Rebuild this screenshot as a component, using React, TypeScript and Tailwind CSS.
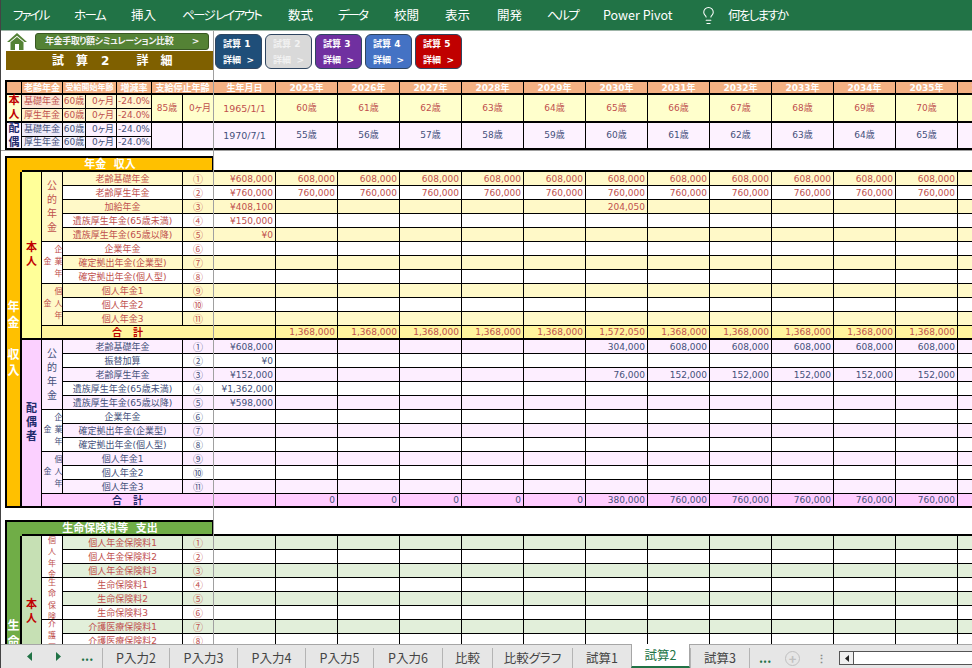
import type { ReactNode } from "react";
import { Lightbulb } from "lucide-react";

const ribbon = [
  { label: "ファイル", w: "w-[61px] tracking-[-2px]" },
  { label: "ホーム", w: "w-[57px] tracking-[-1.6px]" },
  { label: "挿入", w: "w-[51px]" },
  { label: "ページ レイアウト", w: "w-[106px] tracking-[-1.7px]" },
  { label: "数式", w: "w-[50px]" },
  { label: "データ", w: "w-[56px] tracking-[-2px]" },
  { label: "校閲", w: "w-[51px]" },
  { label: "表示", w: "w-[52px]" },
  { label: "開発", w: "w-[50px]" },
  { label: "ヘルプ", w: "w-[56px] tracking-[-1.5px]" },
  { label: "Power Pivot", w: "w-[99px]" },
];

const tiles = [
  { no: "1", cls: "bg-[#1f4e79] text-white" },
  { no: "2", cls: "bg-[#d9d9d9] text-[#f2f2f2]" },
  { no: "3", cls: "bg-[#7030a0] text-white" },
  { no: "4", cls: "bg-[#4472c4] text-white" },
  { no: "5", cls: "bg-[#c00000] text-white" },
];

const circled = ["①", "②", "③", "④", "⑤", "⑥", "⑦", "⑧", "⑨", "⑩", "⑪"];
const years = [2025, 2026, 2027, 2028, 2029, 2030, 2031, 2032, 2033, 2034, 2035, 2036];

type Theme = {
  band: string;
  text: string;
  person: string;
  total: string;
  personText: string;
};

const yellow: Theme = {
  band: "bg-[#fff9c8]",
  text: "text-[#c0504d]",
  person: "bg-[#ffff99]",
  total: "bg-[#fff59d]",
  personText: "text-[#c00000]",
};
const pink: Theme = {
  band: "bg-[#fdeeff]",
  text: "text-[#44507a]",
  person: "bg-[#fbd0ff]",
  total: "bg-[#ffccff]",
  personText: "text-[#1f2a6b]",
};
const green: Theme = {
  band: "bg-[#e2efda]",
  text: "text-[#c0504d]",
  person: "bg-[#c6e0b4]",
  total: "bg-[#c6e0b4]",
  personText: "text-[#c00000]",
};

type Row = { name: string; first?: string; vals?: string[] };
type Group = { at: number; span: number; label: string; wrap?: boolean; small?: boolean; fill: boolean };

const same = (v: string) => years.map(() => v);
const from2030 = (a: string, b: string) => years.map((_, i) => (i < 5 ? "" : i === 5 ? a : b));

const selfRows: Row[] = [
  { name: "老齢基礎年金", first: "¥608,000", vals: same("608,000") },
  { name: "老齢厚生年金", first: "¥760,000", vals: same("760,000") },
  { name: "加給年金", first: "¥408,100", vals: years.map((_, i) => (i === 5 ? "204,050" : "")) },
  { name: "遺族厚生年金(65歳未満)", first: "¥150,000" },
  { name: "遺族厚生年金(65歳以降)", first: "¥0" },
  { name: "企業年金" },
  { name: "確定拠出年金(企業型)" },
  { name: "確定拠出年金(個人型)" },
  { name: "個人年金1" },
  { name: "個人年金2" },
  { name: "個人年金3" },
];

const spouseRows: Row[] = [
  { name: "老齢基礎年金", first: "¥608,000", vals: from2030("304,000", "608,000") },
  { name: "振替加算", first: "¥0" },
  { name: "老齢厚生年金", first: "¥152,000", vals: from2030("76,000", "152,000") },
  { name: "遺族厚生年金(65歳未満)", first: "¥1,362,000" },
  { name: "遺族厚生年金(65歳以降)", first: "¥598,000" },
  { name: "企業年金" },
  { name: "確定拠出年金(企業型)" },
  { name: "確定拠出年金(個人型)" },
  { name: "個人年金1" },
  { name: "個人年金2" },
  { name: "個人年金3" },
];

const insuranceRows: Row[] = [
  { name: "個人年金保険料1" },
  { name: "個人年金保険料2" },
  { name: "個人年金保険料3" },
  { name: "生命保険料1" },
  { name: "生命保険料2" },
  { name: "生命保険料3" },
  { name: "介護医療保険料1" },
  { name: "介護医療保険料2" },
];

const pensionGroups: Group[] = [
  { at: 0, span: 5, label: "公的年金", fill: true },
  { at: 5, span: 3, label: "企業年金", wrap: true, fill: false },
  { at: 8, span: 3, label: "個人年金", wrap: true, fill: true },
];
const insuranceGroups: Group[] = [
  { at: 0, span: 3, label: "個人年金", small: true, fill: false },
  { at: 3, span: 3, label: "生命保険", small: true, fill: false },
  { at: 6, span: 2, label: "介護医療", small: true, fill: false },
];

const line = "border-r border-b border-black";

function Cols({ head }: { head: string[] }) {
  return (
    <colgroup>
      {head.map((w, i) => (
        <col key={i} className={w} />
      ))}
      <col className="w-[62px]" />
      {years.map((y) => (
        <col key={y} className="w-[62px]" />
      ))}
    </colgroup>
  );
}

function GroupCell({ g, theme }: { g: Group; theme: Theme }) {
  const chars = g.label.split("");
  return (
    <td rowSpan={g.span} className={`${line} ${g.fill ? theme.band : "bg-white"} ${theme.text}`}>
      {g.wrap ? (
        <div className="h-[41px] overflow-hidden flex items-center justify-center">
          <span className="h-[41px] text-center text-[8px] leading-[11px] tracking-[4px] [writing-mode:vertical-rl]">{g.label}</span>
        </div>
      ) : g.small ? (
        <div className={`${g.span === 3 ? "h-[41px]" : "h-[27px]"} overflow-hidden`}>
          <div className="-mt-[2px] flex flex-col items-center text-[8px] leading-[11.3px] font-['Noto_Sans_CJK_JP',sans-serif]">
            {chars.map((c, i) => (
              <span key={i}>{c}</span>
            ))}
          </div>
        </div>
      ) : (
        <div className="flex flex-col items-center justify-center text-[10px] leading-[14px]">
          {chars.map((c, i) => (
            <span key={i}>{c}</span>
          ))}
        </div>
      )}
    </td>
  );
}

function PersonCell({ label, span, theme, align }: { label: string; span: number; theme: Theme; align?: string }) {
  return (
    <td rowSpan={span} className={`border-r border-b-2 border-black ${theme.person} ${align ?? ""}`}>
      <div className={`flex flex-col items-center text-[11px] leading-[14px] font-bold ${theme.personText}`}>
        {label.split("").map((c, i) => (
          <span key={i}>{c}</span>
        ))}
      </div>
    </td>
  );
}

function Block({
  label,
  span,
  rows,
  groups,
  theme,
  total,
  align,
}: {
  label: string;
  span: number;
  rows: Row[];
  groups: Group[];
  theme: Theme;
  total?: string[];
  align?: string;
}) {
  return (
    <>
      {rows.map((row, i) => {
        const tint = i % 2 === 0 ? theme.band : "bg-white";
        const g = groups.find((x) => x.at === i);
        return (
          <tr key={i} className="h-[14px]">
            {i === 0 && <PersonCell label={label} span={span} theme={theme} align={align} />}
            {g && <GroupCell g={g} theme={theme} />}
            <td className={`${line} ${tint} ${theme.text} pt-px text-center whitespace-nowrap`}>{row.name}</td>
            <td className={`${line} ${tint} ${theme.text} pt-px text-center font-['Noto_Sans_CJK_JP',sans-serif] text-[10px]`}>{circled[i]}</td>
            <td className={`${line} ${tint} ${theme.text} pt-px text-right pr-[2px]`}>{row.first}</td>
            {years.map((y, k) => (
              <td key={y} className={`${line} ${tint} ${theme.text} pt-px text-right pr-[2px]`}>
                {row.vals?.[k]}
              </td>
            ))}
          </tr>
        );
      })}
      {total && (
        <tr className="h-[14px] leading-[11px]">
          <td colSpan={3} className={`border-r border-b-2 border-black ${theme.total} ${theme.personText} pt-px font-bold text-[10px]`}>
            <div className="flex justify-center gap-[11px]">
              <span>合</span>
              <span>計</span>
            </div>
          </td>
          <td className={`border-r border-b-2 border-black ${theme.total}`} />
          {total.map((v, k) => (
            <td key={k} className={`border-r border-b-2 border-black ${theme.total} ${theme.text} pt-px text-right pr-[2px]`}>
              {v}
            </td>
          ))}
        </tr>
      )}
    </>
  );
}

function Section({
  title,
  bandCls,
  bandSpan,
  band,
  children,
}: {
  title: string;
  bandCls: string;
  bandSpan: number;
  band: ReactNode;
  children: ReactNode;
}) {
  return (
    <table className="w-[1015px] table-fixed border-separate border-spacing-0 text-[9px] leading-[12px]">
      <Cols head={["w-[17px]", "w-[20px]", "w-[21px]", "w-[120px]", "w-[31px]"]} />
      <tbody>
        <tr className="h-[16px]">
          <td className={`border-l-2 border-t-2 border-black ${bandCls}`} />
          <td
            colSpan={4}
            className={`border-t-2 border-b-2 border-r-2 border-black ${bandCls} text-white text-[11px] leading-[11px] pt-px font-bold text-center pr-[14px] whitespace-pre`}
          >
            {title}
          </td>
          <td className="border-b-2 border-black" colSpan={13} />
        </tr>
        <tr className="h-0">
          <td rowSpan={bandSpan} className={`border-l-2 border-r-2 border-b-2 border-black ${bandCls}`}>
            {band}
          </td>
        </tr>
        {children}
      </tbody>
    </table>
  );
}

function BandText({ chars }: { chars: string[] }) {
  return (
    <div className="flex flex-col items-center text-white font-bold text-[12px] leading-[16px]">
      {chars.map((c, i) => (
        <span key={i} className="h-[16px]">
          {c}
        </span>
      ))}
    </div>
  );
}

const peach = "border-t-2 border-b-2 border-r border-black bg-[#f4b183] text-white font-bold leading-[10px] pt-px";

function Summary() {
  const people = [
    {
      c: ["本", "人"],
      mark: "text-[#c00000]",
      text: "text-[#c0504d]",
      bg: "bg-[#ffffcc]",
      cell: "bg-[#fff6d0]",
      kinds: ["bg-[#fbe5d6]", "bg-[#fff2cc]"],
      stop: ["85歳", "0ヶ月"],
      born: "1965/1/1",
      age: 60,
    },
    {
      c: ["配", "偶"],
      mark: "text-[#1f2a6b]",
      text: "text-[#44507a]",
      bg: "bg-[#fdf2ff]",
      cell: "bg-[#fdf2ff]",
      kinds: ["bg-[#eeeaf8]", "bg-[#f4f1fc]"],
      stop: ["", ""],
      born: "1970/7/1",
      age: 55,
    },
  ];
  return (
    <table className="w-[1015px] table-fixed border-separate border-spacing-0 text-[9px] leading-[11px]">
      <Cols head={["w-[17px]", "w-[41px]", "w-[23px]", "w-[31px]", "w-[35px]", "w-[31px]", "w-[31px]"]} />
      <tbody>
        <tr className="h-[15px]">
          <td className={`${peach} border-l-2`} />
          <td className={`${peach} text-center`}>老齢年金</td>
          <td colSpan={2} className={`${peach} text-center text-[8px]`}>受給開始年齢</td>
          <td className={`${peach} text-center`}>増減率</td>
          <td colSpan={2} className={`${peach} text-center`}>支給停止年齢</td>
          <td className={`${peach} text-center`}>生年月日</td>
          {years.map((y) => (
            <td key={y} className={`${peach} text-center`}>
              {y}年
            </td>
          ))}
        </tr>
        {people.map((p, n) =>
          [0, 1].map((r) => {
            const under = r === 0 ? "border-b" : "border-b-2";
            return (
              <tr key={`${n}${r}`} className={n === 1 && r === 1 ? "h-[13px]" : "h-[14px]"}>
                {r === 0 && (
                  <td rowSpan={2} className={`border-l-2 border-r border-b-2 border-black ${p.bg} ${p.mark} font-bold text-[11px]`}>
                    <div className="h-[24px] flex flex-col justify-center items-center">
                      {p.c.map((x) => (
                        <span key={x} className="h-[14px] shrink-0 leading-[14px]">
                          {x}
                        </span>
                      ))}
                    </div>
                  </td>
                )}
                <td className={`border-r ${under} border-black ${p.kinds[r]} ${p.text} text-center whitespace-nowrap`}>
                  {r === 0 ? "基礎年金" : "厚生年金"}
                </td>
                <td className={`border-r ${under} border-black ${p.kinds[1]} ${p.text} text-center`}>60歳</td>
                <td className={`border-r ${under} border-black ${p.cell} ${p.text} text-right pr-[2px] [font-feature-settings:'palt']`}>0ヶ月</td>
                <td className={`border-r ${under} border-black ${p.cell} ${p.text} text-center`}>-24.0%</td>
                {r === 0 && (
                  <>
                    <td rowSpan={2} className={`border-r border-b-2 border-black ${p.bg} ${p.text} text-center`}>{p.stop[0]}</td>
                    <td rowSpan={2} className={`border-r border-b-2 border-black ${p.bg} ${p.text} text-right pr-[2px] [font-feature-settings:'palt']`}>{p.stop[1]}</td>
                    <td rowSpan={2} className={`border-r border-b-2 border-black ${p.bg} ${p.text} text-center text-[9.5px]`}>{p.born}</td>
                    {years.map((y, i) => (
                      <td key={y} rowSpan={2} className={`border-r border-b-2 border-black ${p.bg} ${p.text} text-center`}>
                        {p.age + i}歳
                      </td>
                    ))}
                  </>
                )}
              </tr>
            );
          }),
        )}
      </tbody>
    </table>
  );
}

function TopBar() {
  return (
    <div className="flex h-[49px]">
      <div className="w-[208px] pl-[1px] pt-[2px] flex flex-col">
        <div className="flex h-[18px] items-start">
          <svg viewBox="0 0 20 17" className="ml-[1px] w-[20px] h-[17px]">
            <path d="M10 0 L20 9 L17.5 9 L10 2.8 L2.5 9 L0 9 Z" fill="#548235" />
            <path d="M3.5 9.2 L10 4 L16.5 9.2 V17 H12 V11 H8 V17 H3.5 Z" fill="#548235" />
          </svg>
          <div className="ml-[8px] w-[174px] h-[17px] rounded-[3px] border border-[#385723] bg-[#548235] text-[#f2f2f2] text-[9px] tracking-[-0.4px] font-bold flex items-center pl-[9px] pr-[9px] justify-between [font-feature-settings:'palt']">
            <span>年金手取り額シミュレーション比較</span>
            <span>&gt;</span>
          </div>
        </div>
        <div className="h-[19px] bg-[#7f6000] text-white text-[12px] font-bold flex items-center pl-[46px] whitespace-pre">
          試<span className="w-[12px]" />算<span className="w-[13px]" />2<span className="w-[27px]" />詳<span className="w-[12px]" />細
        </div>
      </div>
      <div className="ml-[2px] pt-[3px] flex gap-[3px] items-start">
        {tiles.map((t) => (
          <div key={t.no} className={`w-[47px] h-[35px] rounded-[6px] border border-[#2f4560] ${t.cls} text-[9px] font-bold flex flex-col pl-[7px] pt-px leading-[16px]`}>
            <span>試算 {t.no}</span>
            <span className="flex justify-between pr-[7px]">
              <span>詳細</span>
              <span>&gt;</span>
            </span>
          </div>
        ))}
      </div>
    </div>
  );
}

function TabBar() {
  const tabs = [
    { t: "P入力2", w: "w-[67px]" },
    { t: "P入力3", w: "w-[68px]" },
    { t: "P入力4", w: "w-[68px]" },
    { t: "P入力5", w: "w-[68px]" },
    { t: "P入力6", w: "w-[69px]" },
    { t: "比較", w: "w-[50px]" },
    { t: "比較グラフ", w: "w-[80px]" },
    { t: "試算1", w: "w-[59px]" },
    { t: "試算2", w: "w-[59px]", on: true },
    { t: "試算3", w: "w-[59px]" },
  ];
  return (
    <div className="h-[24px] shrink-0 border-t border-[#a6a6a6] bg-[#e6e6e6] flex text-[12.5px] text-[#444] font-['Noto_Sans_CJK_JP',sans-serif] [font-feature-settings:'palt']">
      <div className="w-[101px] flex items-center text-[#217346]">
        <svg viewBox="0 0 6 9" className="ml-[26px] w-[6px] h-[9px]">
          <path d="M5 0 V9 L0 4.5 Z" fill="currentColor" />
        </svg>
        <svg viewBox="0 0 6 9" className="ml-[22px] w-[6px] h-[9px]">
          <path d="M1 0 V9 L6 4.5 Z" fill="currentColor" />
        </svg>
        <span className="ml-[20px] font-bold leading-none">...</span>
      </div>
      {tabs.map((tab) =>
        tab.on ? (
          <div key={tab.t} className={`${tab.w} -mt-px h-[24px] bg-white border-l border-r border-[#a6a6a6] border-b-2 border-b-[#217346] text-[#217346] flex items-center justify-center`}>
            {tab.t}
          </div>
        ) : (
          <div key={tab.t} className={`${tab.w} self-end h-[20px] border-l border-[#b4b4b4] flex items-center justify-center`}>
            {tab.t}
          </div>
        ),
      )}
      <div className="self-end h-[20px] border-l border-[#b4b4b4] flex items-center flex-1 text-[#217346]">
        <span className="ml-[9px] w-[12px] font-bold leading-none">...</span>
        <span className="ml-[14px] w-[15px] h-[15px] rounded-full border border-[#c0c0c0] text-[#c0c0c0] flex items-center justify-center text-[13px] leading-none font-bold">
          +
        </span>
        <span className="ml-[15px] w-[12px] text-center text-[#8a8a8a] text-[11px] font-bold leading-none">⋮</span>
        <div className="ml-[12px] h-[14px] flex-1 border border-[#555] border-r-0 bg-white flex">
          <div className="w-[14px] border-r border-[#555] bg-[#f0f0f0] flex items-center justify-center">
            <svg viewBox="0 0 4 7" className="w-[4px] h-[7px]">
              <path d="M4 0 V7 L0 3.5 Z" fill="#222" />
            </svg>
          </div>
        </div>
      </div>
    </div>
  );
}

export default function App() {
  return (
    <div className="w-[972px] h-[668px] overflow-hidden flex flex-col bg-white border-l border-[#444] font-['DejaVu_Sans','Noto_Sans_CJK_JP',sans-serif]">
      <div className="h-[31px] shrink-0 bg-[#217346] border-b border-[#9fb5a8] flex items-center pl-[12px] text-white text-[12.5px] font-['Noto_Sans_CJK_JP',sans-serif] [font-feature-settings:'palt']">
        {ribbon.map((r) => (
          <span key={r.label} className={`${r.w} whitespace-nowrap`}>
            {r.label}
          </span>
        ))}
        <Lightbulb className="w-[19px] h-[19px] -ml-[3px]" strokeWidth={1.3} />
        <span className="ml-[10px] tracking-[-1.7px]">何をしますか</span>
      </div>
      <div className="relative flex-1 overflow-hidden pl-[4px]">
        <TopBar />
        <Summary />
        <div className="mt-[6px]">
          <Section title="年金  収入" bandCls="bg-[#ffc000]" bandSpan={25} band={<BandText chars={["年", "金", "", "収", "入"]} />}>
            <Block
              label="本人"
              span={12}
              rows={selfRows}
              groups={pensionGroups}
              theme={yellow}
              total={[...same("1,368,000").slice(0, 5), "1,572,050", ...same("1,368,000").slice(0, 6)]}
            />
            <Block
              label="配偶者"
              span={12}
              rows={spouseRows}
              groups={pensionGroups}
              theme={pink}
              total={["0", "0", "0", "0", "0", "380,000", ...same("760,000").slice(0, 6)]}
            />
          </Section>
        </div>
        <div className="mt-[12px]">
          <Section
            title="生命保険料等  支出"
            bandCls="bg-[#70ad47]"
            bandSpan={9}
            band={
              <div className="h-[108px] overflow-hidden pt-[81px]">
                <BandText chars={["生", "命"]} />
              </div>
            }
          >
            <Block label="本人" span={8} rows={insuranceRows} groups={insuranceGroups} theme={green} align="align-top pt-[62px]" />
          </Section>
        </div>
        <div className="absolute left-[212px] top-0 bottom-0 w-px bg-[#a0a0a0]" />
        <div className="absolute left-0 right-0 top-[119px] h-px bg-[#a0a0a0]" />
      </div>
      <TabBar />
    </div>
  );
}
